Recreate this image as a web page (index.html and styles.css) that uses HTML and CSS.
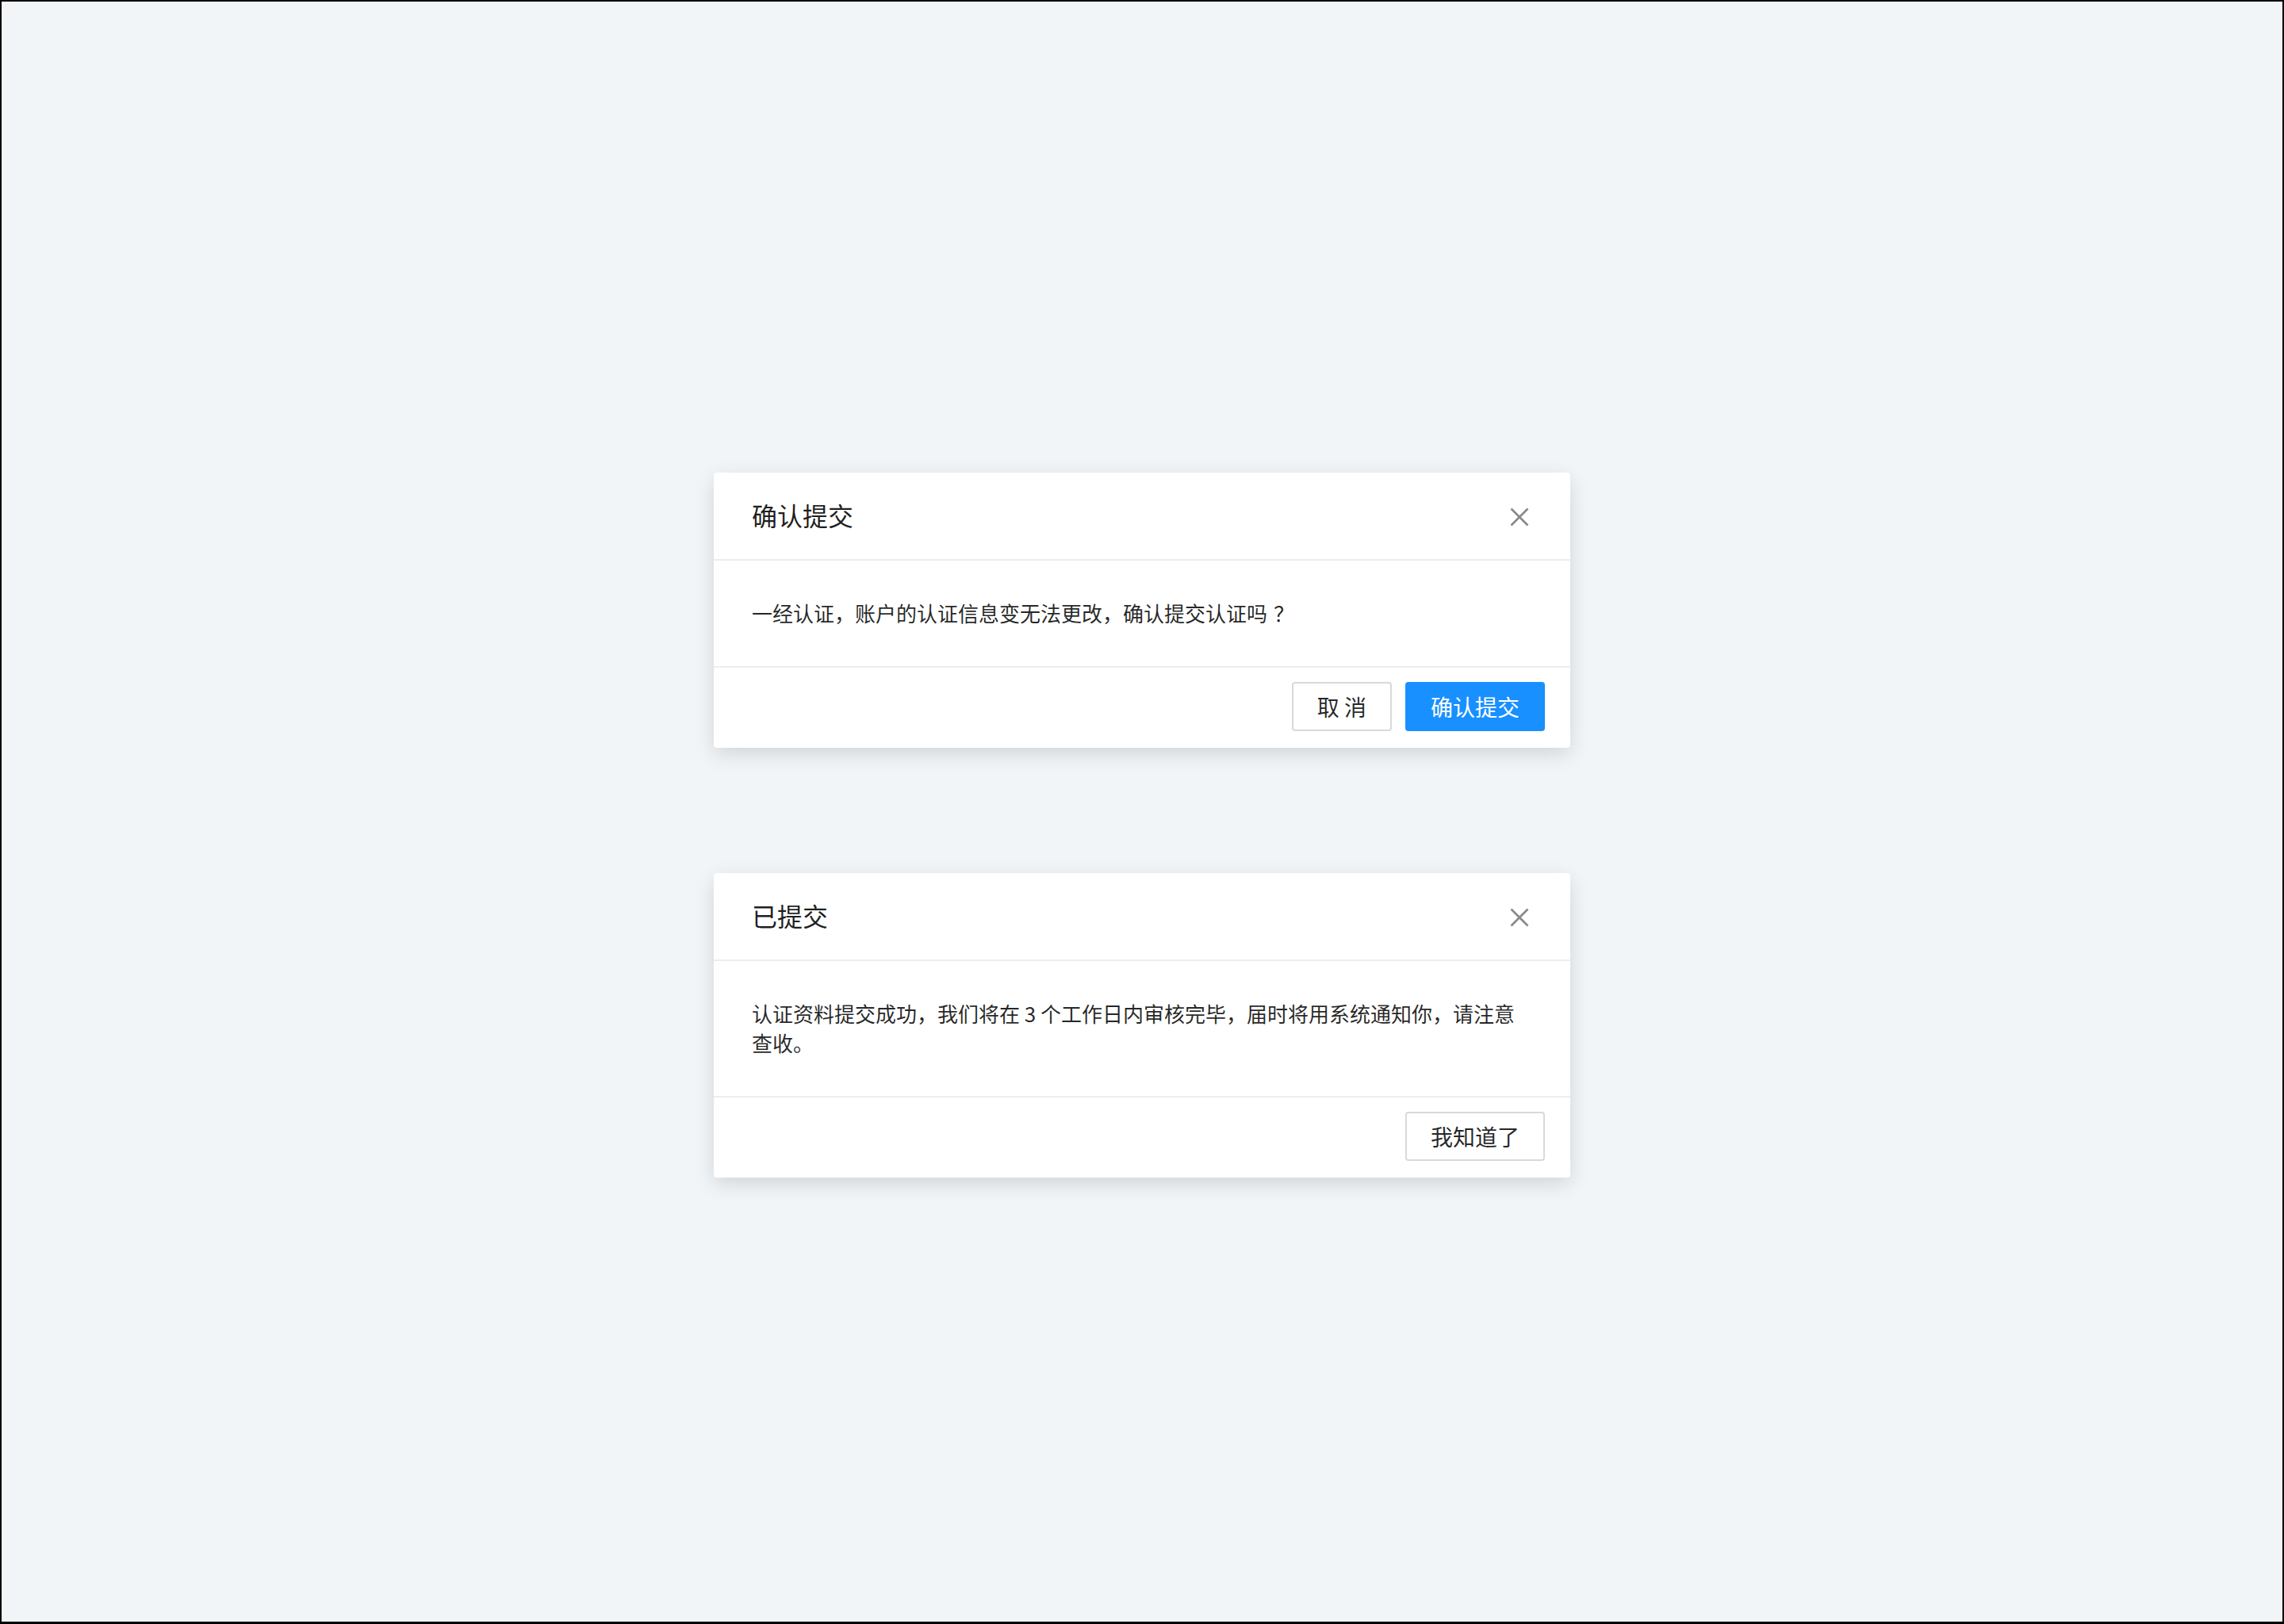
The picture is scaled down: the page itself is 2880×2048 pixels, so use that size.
FILE: index.html
```html
<!DOCTYPE html>
<html lang="zh-CN">
<head>
<meta charset="utf-8">
<title>Modal</title>
<link rel="stylesheet" href="styles.css">
</head>
<body>
<div class="page">
  <div class="modal">
    <div class="modal-header">
      <div class="modal-title">确认提交</div>
      <button class="modal-close" aria-label="关闭">
        <svg viewBox="0 0 24 24" width="24" height="24"><path d="M1.5 1.5 L22.5 22.5 M22.5 1.5 L1.5 22.5" stroke="#888" stroke-width="2.6" fill="none"/></svg>
      </button>
    </div>
    <div class="modal-body">一经认证，账户的认证信息变无法更改，确认提交认证吗<span class="punct">？</span></div>
    <div class="modal-footer">
      <button class="btn">取 消</button>
      <button class="btn btn-primary">确认提交</button>
    </div>
  </div>
  <div class="modal">
    <div class="modal-header">
      <div class="modal-title">已提交</div>
      <button class="modal-close" aria-label="关闭">
        <svg viewBox="0 0 24 24" width="24" height="24"><path d="M1.5 1.5 L22.5 22.5 M22.5 1.5 L1.5 22.5" stroke="#888" stroke-width="2.6" fill="none"/></svg>
      </button>
    </div>
    <div class="modal-body">认证资料提交成功，我们将在 3 个工作日内审核完毕，届时将用系统通知你，请注意查收。</div>
    <div class="modal-footer">
      <button class="btn">我知道了</button>
    </div>
  </div>
</div>
</body>
</html>
```

FILE: styles.css
```css
* { box-sizing: border-box; }
html, body { margin: 0; padding: 0; }
body {
  font-family: "Noto Sans CJK SC", "Noto Sans", sans-serif;
  color: rgba(0, 0, 0, 0.85);
}
.page {
  width: 2880px;
  height: 2048px;
  border: 2px solid #000;
  border-bottom-width: 3px;
  background: #f1f5f8;
  display: flex;
  flex-direction: column;
  align-items: center;
  padding-top: 594px;
  gap: 158px;
}
.modal {
  width: 1080px;
  background: #fff;
  border-radius: 4px;
  box-shadow: 0 8px 26px rgba(0, 0, 0, 0.13);
}
.modal-header {
  display: flex;
  align-items: center;
  justify-content: space-between;
  padding: 31px 52px 34px 48px;
  border-bottom: 2px solid #ededed;
}
.modal-title {
  font-size: 32px;
  line-height: 44px;
  color: rgba(0, 0, 0, 0.88);
}
.modal-close {
  border: 0;
  background: none;
  padding: 0;
  margin-top: 5px;
  width: 24px;
  height: 24px;
  display: flex;
  cursor: pointer;
}
.modal-body {
  padding: 47px 48px 49px;
  font-size: 26px;
  line-height: 37px;
}
.punct {
  padding-left: 8px;
}
.modal-footer {
  display: flex;
  justify-content: flex-end;
  gap: 17px;
  padding: 18px 32px 21px;
  border-top: 2px solid #ededed;
}
.btn {
  height: 62px;
  padding: 0 30px;
  font-family: inherit;
  font-size: 28px;
  line-height: 58px;
  color: rgba(0, 0, 0, 0.85);
  background: #fff;
  border: 2px solid #d9d9d9;
  border-radius: 4px;
  cursor: pointer;
}
.btn-primary {
  background: #1890ff;
  border-color: #1890ff;
  color: #fff;
}
```
